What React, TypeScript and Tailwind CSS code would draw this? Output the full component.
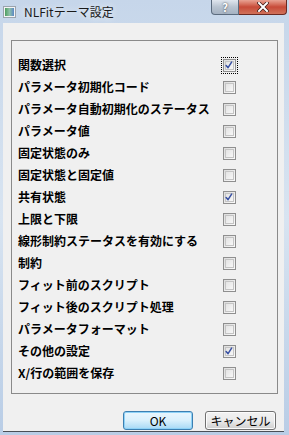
import React from 'react'

const items: { label: string; checked: boolean }[] = [
  { label: '関数選択', checked: true },
  { label: 'パラメータ初期化コード', checked: false },
  { label: 'パラメータ自動初期化のステータス', checked: false },
  { label: 'パラメータ値', checked: false },
  { label: '固定状態のみ', checked: false },
  { label: '固定状態と固定値', checked: false },
  { label: '共有状態', checked: true },
  { label: '上限と下限', checked: false },
  { label: '線形制約ステータスを有効にする', checked: false },
  { label: '制約', checked: false },
  { label: 'フィット前のスクリプト', checked: false },
  { label: 'フィット後のスクリプト処理', checked: false },
  { label: 'パラメータフォーマット', checked: false },
  { label: 'その他の設定', checked: true },
  { label: 'X/行の範囲を保存', checked: false },
]

function Checkbox({ checked, focused }: { checked: boolean; focused?: boolean }) {
  return (
    <span
      className={
        'relative flex size-[13px] shrink-0 items-center justify-center border border-[#8f8f8f] bg-gradient-to-br from-[#dcdcdc] to-[#fbfbfb] ' +
        (focused ? 'outline-1 outline-offset-1 outline-dotted outline-black' : '')
      }
    >
      <span className="size-[9px] border border-[#c4c4c4] bg-gradient-to-br from-[#e4e4e4] to-[#f7f7f7]" />
      {checked && (
        <svg
          viewBox="0 0 13 13"
          className="absolute inset-0 size-[11px]"
          fill="none"
        >
          <path
            d="M2.5 6.5 L4.8 9 L9 2.5"
            stroke="#3a52a4"
            strokeWidth="1.8"
            strokeLinecap="round"
            strokeLinejoin="round"
          />
        </svg>
      )}
    </span>
  )
}

export default function App() {
  return (
    <div
      className="flex h-[435px] w-[289px] flex-col overflow-hidden bg-gradient-to-b from-[#c6d6ea] via-[#d8e4f1] to-[#b9cde6]"
      style={{ fontFamily: '"Noto Sans CJK JP", "Liberation Sans", sans-serif' }}
    >
      {/* Title bar */}
      <div className="relative flex h-[23px] shrink-0 items-center">
        <span className="ml-[3px] flex h-[12px] w-[13px] items-center justify-center border border-[#9aa3ad] bg-[#f4f4f4]">
          <span className="h-[8px] w-[9px] bg-gradient-to-r from-[#4d9e5e] via-[#8fc0a8] to-[#5c87c4]" />
        </span>
        <span className="ml-[8px] text-[12px] leading-none text-[#1a1a1a] [text-shadow:0_0_6px_#fff]">
          NLFitテーマ設定
        </span>
        <div className="absolute top-0 right-[2px] flex h-[15px]">
          <span className="flex w-[28px] items-center justify-center rounded-bl-[4px] border border-t-0 border-[#5b6b7e] bg-gradient-to-b from-[#e0e6ee] via-[#b8c3d0] to-[#a5b2c2] text-[11px] leading-none font-bold text-white [text-shadow:0_0_2px_#333]">
            ?
          </span>
          <span className="flex w-[48px] items-center justify-center rounded-br-[4px] border border-t-0 border-l-0 border-[#6b2a22] bg-gradient-to-b from-[#e8a293] via-[#c74a38] to-[#d0715a]">
            <svg viewBox="0 0 12 10" className="h-[10px] w-[12px]">
              <path
                d="M2 1 L10 9 M10 1 L2 9"
                stroke="#3b1a16"
                strokeWidth="3.4"
                strokeLinecap="square"
              />
              <path
                d="M2 1 L10 9 M10 1 L2 9"
                stroke="#ffffff"
                strokeWidth="2"
                strokeLinecap="square"
              />
            </svg>
          </span>
        </div>
      </div>

      {/* Client area */}
      <div className="mr-[5px] ml-[3px] flex h-[409px] flex-col border-b border-[#4a4f57] bg-[#f0f0f0]">
        <div className="mt-[17px] mr-[6px] ml-[8px] flex h-[354px] flex-col border border-[#8a8a8a] pt-[13px] pr-[41px] pl-[6px]">
          {items.map((it, i) => (
            <div key={it.label} className="flex h-[22px] items-center justify-between">
              <span className="text-[12px] leading-none font-bold text-black">
                {it.label}
              </span>
              <Checkbox checked={it.checked} focused={i === 0} />
            </div>
          ))}
        </div>
        <div className="mt-[17px] flex justify-end gap-[12px] pr-[8px]">
          <button className="flex h-[19px] w-[70px] items-center justify-center rounded-[3px] border border-[#3c7fb1] bg-gradient-to-b from-[#eaf6fd] via-[#d9f0fc] to-[#a7d9f5] text-[12px] leading-none text-black shadow-[inset_0_0_0_1px_#8ed2f7]">
            OK
          </button>
          <button className="flex h-[19px] w-[71px] items-center justify-center rounded-[3px] border border-[#707070] bg-gradient-to-b from-[#f2f2f2] via-[#ebebeb] to-[#cfcfcf] text-[12px] leading-none text-black shadow-[inset_0_0_0_1px_#fcfcfc]">
            キャンセル
          </button>
        </div>
      </div>
    </div>
  )
}
